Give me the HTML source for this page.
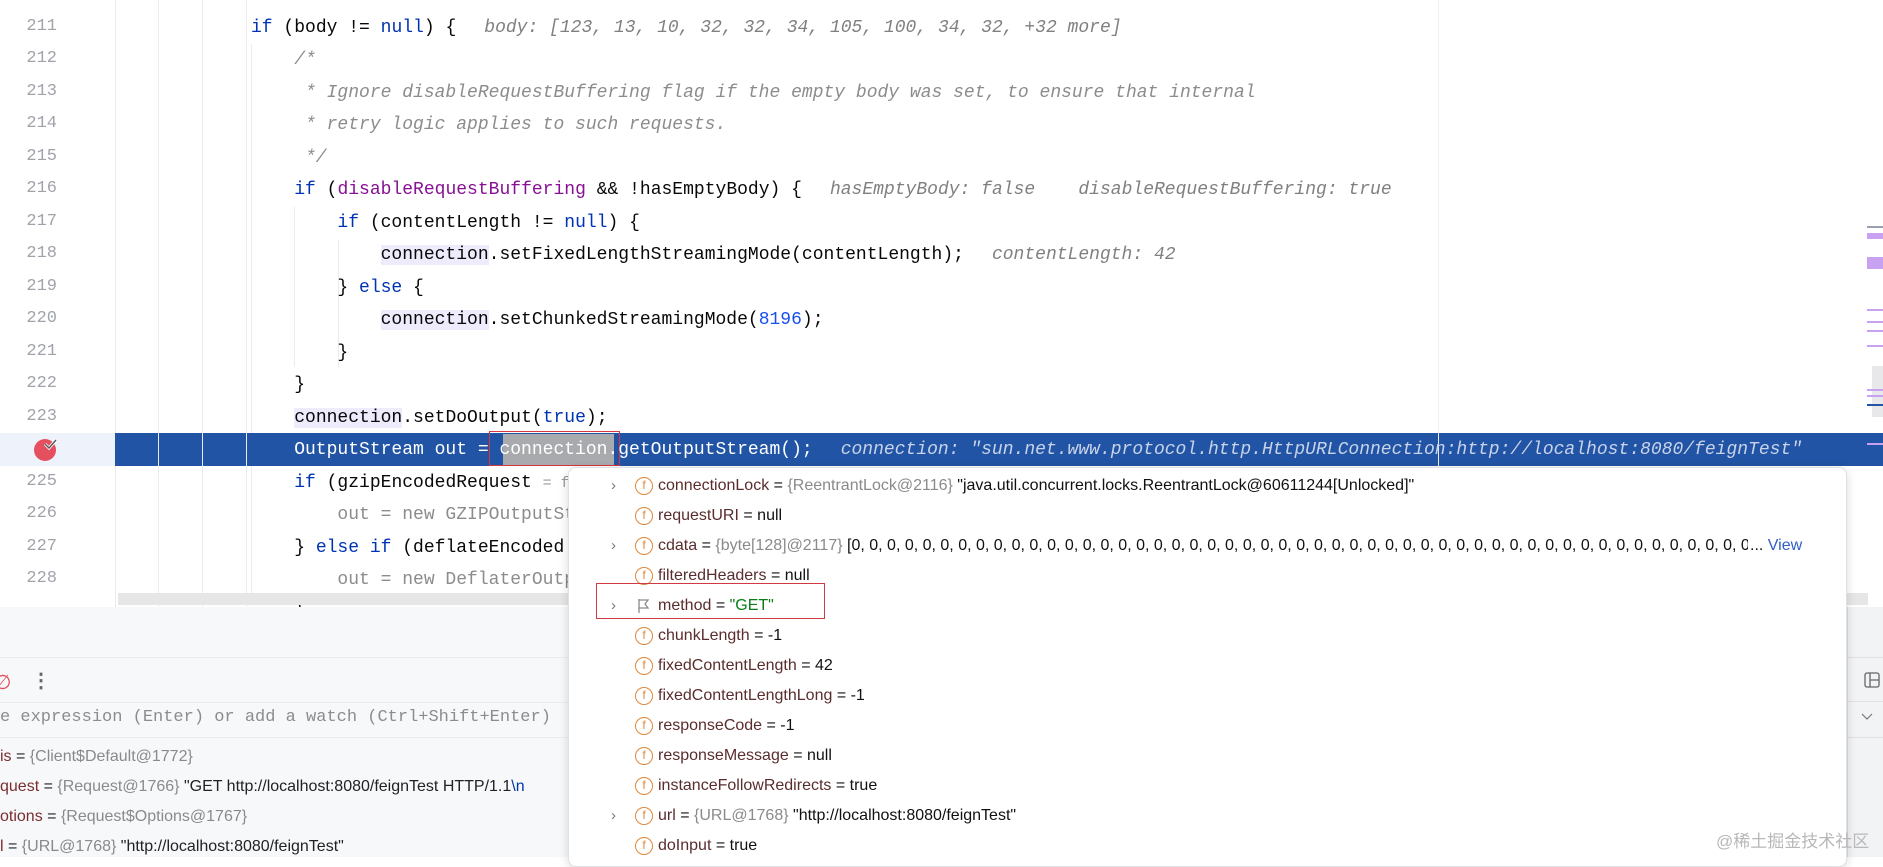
<!DOCTYPE html>
<html><head><meta charset="utf-8">
<style>
*{margin:0;padding:0;box-sizing:border-box}
body{width:1883px;height:857px;overflow:hidden;background:#fff;position:relative;font-family:"Liberation Sans",sans-serif}
.mono{font-family:"Liberation Mono","DejaVu Sans Mono",monospace}
#ed{position:absolute;left:0;top:0;width:1883px;height:607px;background:#fff;overflow:hidden}
.ln{position:absolute;left:0;width:57px;text-align:right;font-size:17px;color:#a0a3aa;font-family:"Liberation Mono",monospace}
.row{position:absolute;left:251px;height:32px;line-height:32px;font-size:18px;white-space:pre;color:#080808;font-family:"Liberation Mono",monospace}
.k{color:#0033b3}.f{color:#871094}.c{color:#8c8c8c;font-style:italic}.n{color:#1750eb}
.h{color:#808080;font-style:italic;margin-left:28px}
.u{background:#edebfc}
.g{color:#8c8c8c}
.vl{position:absolute;width:1px;background:#ebecf0}
#hl{position:absolute;left:115px;top:433px;width:1768px;height:33px;background:#2154a4}
.pop .r{position:absolute;left:0;height:30px;line-height:30px;font-size:16px;white-space:nowrap;color:#5a2d2d}
.fi{position:absolute;left:66px;top:6px;width:18px;height:18px;border:1.5px solid #e0873a;border-radius:50%;color:#e0873a;font-size:12px;line-height:15px;text-align:center;font-family:"Liberation Sans",sans-serif}
.ch{position:absolute;left:42px;top:0;color:#777;font-size:15px}
.gr{color:#8a8a8a}.bk{color:#111}.st{color:#067d17}
.wr{position:absolute;left:0;font-size:16px;white-space:nowrap;color:#222}
.mk{position:absolute;left:1867px;width:16px;background:#c8a2f0}
</style></head><body>
<div id="ed">
  <div style="position:absolute;left:0;top:0;width:115px;height:607px;background:#fff"></div>
  <div style="position:absolute;left:0;top:433px;width:115px;height:33px;background:#eef2fb"></div>
  <div class="vl" style="left:115px;top:0;height:607px"></div>
  <div class="vl" style="left:158px;top:0;height:607px"></div>
  <div class="vl" style="left:202px;top:0;height:607px"></div>
  <div class="vl" style="left:246px;top:0;height:607px"></div>
  <div class="vl" style="left:1438px;top:0;height:607px;background:#eeeff2"></div>
  <!-- indent guides -->
  <div class="vl" style="left:251px;top:44px;height:560px"></div>
  <div class="vl" style="left:294px;top:207px;height:160px"></div>
  <div class="vl" style="left:338px;top:240px;height:128px"></div>
  <div id="hl"></div>
  <div class="vl" style="left:158px;top:433px;height:33px;background:#e8ecf5"></div>
  <div class="vl" style="left:202px;top:433px;height:33px;background:#e8ecf5"></div>
  <div class="vl" style="left:246px;top:433px;height:33px;background:#e8ecf5"></div>
  <div class="vl" style="left:1438px;top:433px;height:33px;background:#e8ecf5"></div>

  <div class="ln" style="top:-16px">210</div>
  <div class="ln" style="top:17px">211</div>
  <div class="ln" style="top:49px">212</div>
  <div class="ln" style="top:82px">213</div>
  <div class="ln" style="top:114px">214</div>
  <div class="ln" style="top:147px">215</div>
  <div class="ln" style="top:179px">216</div>
  <div class="ln" style="top:212px">217</div>
  <div class="ln" style="top:244px">218</div>
  <div class="ln" style="top:277px">219</div>
  <div class="ln" style="top:309px">220</div>
  <div class="ln" style="top:342px">221</div>
  <div class="ln" style="top:374px">222</div>
  <div class="ln" style="top:407px">223</div>
  <div class="ln" style="top:472px">225</div>
  <div class="ln" style="top:504px">226</div>
  <div class="ln" style="top:537px">227</div>
  <div class="ln" style="top:569px">228</div>
  <!-- breakpoint -->
  <svg style="position:absolute;left:32px;top:436px" width="28" height="26" viewBox="0 0 28 26"><circle cx="13" cy="14" r="11" fill="#e5505f"/><path d="M13 8l4 4 7-8" stroke="#fff" stroke-width="3" fill="none"/><path d="M13 8l4 4 7-8" stroke="#555" stroke-width="1.4" fill="none"/></svg>

  <div class="row" style="top:12px"><span class="k">if</span> (body != <span class="k">null</span>) {<span class="h">body: [123, 13, 10, 32, 32, 34, 105, 100, 34, 32, +32 more]</span></div>
  <div class="row c" style="top:44px">    /*</div>
  <div class="row c" style="top:77px">     * Ignore disableRequestBuffering flag if the empty body was set, to ensure that internal</div>
  <div class="row c" style="top:109px">     * retry logic applies to such requests.</div>
  <div class="row c" style="top:142px">     */</div>
  <div class="row" style="top:174px">    <span class="k">if</span> (<span class="f">disableRequestBuffering</span> &amp;&amp; !hasEmptyBody) {<span class="h">hasEmptyBody: false    disableRequestBuffering: true</span></div>
  <div class="row" style="top:207px">        <span class="k">if</span> (contentLength != <span class="k">null</span>) {</div>
  <div class="row" style="top:239px">            <span class="u">connection</span>.setFixedLengthStreamingMode(contentLength);<span class="h">contentLength: 42</span></div>
  <div class="row" style="top:272px">        } <span class="k">else</span> {</div>
  <div class="row" style="top:304px">            <span class="u">connection</span>.setChunkedStreamingMode(<span class="n">8196</span>);</div>
  <div class="row" style="top:337px">        }</div>
  <div class="row" style="top:369px">    }</div>
  <div class="row" style="top:402px">    <span class="u">connection</span>.setDoOutput(<span class="k">true</span>);</div>
  <div style="position:absolute;left:503px;top:434px;width:111px;height:31px;background:#a9aaad"></div>
  <div style="position:absolute;left:489px;top:431px;width:131px;height:35px;border:1.5px solid #d9363e"></div>
  <div class="row" style="top:434px;color:#fff">    OutputStream out = connection.getOutputStream();<span class="h" style="color:#c8d3ea">connection: "sun.net.www.protocol.http.HttpURLConnection:http://localhost:8080/feignTest"</span></div>
  <div class="row" style="top:467px">    <span class="k">if</span> (gzipEncodedRequest <span style="color:#999;font-size:15px">= f</span></div>
  <div class="row g" style="top:499px">        out = new GZIPOutputStream</div>
  <div class="row" style="top:532px">    } <span class="k">else if</span> (deflateEncoded</div>
  <div class="row g" style="top:564px">        out = new DeflaterOutputStream</div>
  <div class="row" style="top:597px">    }</div>
  <!-- scrollbar -->
  <div style="position:absolute;left:118px;top:593px;width:1750px;height:12px;background:#e6e6e6"></div>
  <!-- markers -->
  <div class="mk" style="top:226px;height:2px;background:#9aa0b0"></div>
  <div class="mk" style="top:233px;height:6px"></div>
  <div class="mk" style="top:257px;height:12px"></div>
  <div class="mk" style="top:309px;height:2px"></div>
  <div class="mk" style="top:321px;height:2px"></div>
  <div class="mk" style="top:330px;height:2px"></div>
  <div class="mk" style="top:345px;height:2px"></div>
  <div style="position:absolute;left:1872px;top:366px;width:11px;height:51px;background:#e8e8ea"></div>
  <div class="mk" style="top:389px;height:2px"></div>
  <div class="mk" style="top:395px;height:2px"></div>
  <div class="mk" style="top:404px;height:2px;background:#2154a4"></div>
  <div class="mk" style="top:443px;height:2px"></div>
</div>

<!-- bottom panel -->
<div style="position:absolute;left:0;top:607px;width:1883px;height:250px;background:#f7f8fa">
  <div style="position:absolute;left:0;top:50px;width:1847px;height:1px;background:#ebecf0"></div>
  <div style="position:absolute;left:-6px;top:63px;color:#e5505f;font-size:20px">∅</div>
  <div style="position:absolute;left:31px;top:61px;color:#666;font-size:20px;font-weight:bold">⋮</div>
  <div style="position:absolute;left:0;top:95px;width:1847px;height:1px;background:#ebecf0"></div>
  <div class="mono" style="position:absolute;left:0;top:101px;font-size:17px;color:#8c8c8c;white-space:pre">e expression (Enter) or add a watch (Ctrl+Shift+Enter)</div>
  <div style="position:absolute;left:0;top:130px;width:1847px;height:1px;background:#ebecf0"></div>
  <div class="wr" style="top:141px"><span style="color:#7a2e2e">is</span> = <span class="gr">{Client$Default@1772}</span></div>
  <div class="wr" style="top:171px"><span style="color:#7a2e2e">quest</span> = <span class="gr">{Request@1766}</span> "GET http://localhost:8080/feignTest HTTP/1.1<span style="color:#0037a6">\n</span></div>
  <div class="wr" style="top:201px"><span style="color:#7a2e2e">otions</span> = <span class="gr">{Request$Options@1767}</span></div>
  <div class="wr" style="top:231px"><span style="color:#7a2e2e">l</span> = <span class="gr">{URL@1768}</span> "http://localhost:8080/feignTest"</div>
  <!-- right strip -->
  <div style="position:absolute;left:1847px;top:0;width:36px;height:250px;background:#f2f3f5;border-left:1px solid #dcdde0"></div>
  <div style="position:absolute;left:1847px;top:50px;width:36px;height:1px;background:#e0e0e3"></div>
  <div style="position:absolute;left:1847px;top:94px;width:36px;height:1px;background:#e0e0e3"></div>
  <div style="position:absolute;left:1847px;top:130px;width:36px;height:1px;background:#e0e0e3"></div>
  <svg style="position:absolute;left:1864px;top:65px" width="16" height="16"><rect x="1" y="1" width="14" height="14" rx="2" fill="none" stroke="#666" stroke-width="1.3"/><path d="M6 1v14M6 8h9" stroke="#666" stroke-width="1.3"/></svg>
  <svg style="position:absolute;left:1861px;top:106px" width="12" height="8"><path d="M1 1l5 5 5-5" stroke="#777" fill="none" stroke-width="1.2"/></svg>
</div>

<!-- popup -->
<div class="pop" style="position:absolute;left:568px;top:467px;width:1279px;height:400px;background:#fff;border:1px solid #dfe1e5;border-radius:8px;box-shadow:0 2px 10px rgba(0,0,0,.15);overflow:hidden">
  <div class="r" style="top:3px;width:1270px"><span class="ch">›</span><span class="fi">f</span><span style="position:absolute;left:89px">connectionLock <span class="bk">=</span> <span class="gr">{ReentrantLock@2116}</span> <span class="bk">"java.util.concurrent.locks.ReentrantLock@60611244[Unlocked]"</span></span></div>
  <div class="r" style="top:33px"><span class="fi">f</span><span style="position:absolute;left:89px">requestURI <span class="bk">= null</span></span></div>
  <div class="r" style="top:63px;width:1270px"><span class="ch">›</span><span class="fi">f</span><span style="position:absolute;left:89px;width:1090px;overflow:hidden">cdata <span class="bk">=</span> <span class="gr">{byte[128]@2117}</span> <span class="bk">[0, 0, 0, 0, 0, 0, 0, 0, 0, 0, 0, 0, 0, 0, 0, 0, 0, 0, 0, 0, 0, 0, 0, 0, 0, 0, 0, 0, 0, 0, 0, 0, 0, 0, 0, 0, 0, 0, 0, 0, 0, 0, 0, 0, 0, 0, 0, 0, 0, 0, 0, 0, 0, 0, 0, 0, 0, 0, 0, 0,</span></span><span style="position:absolute;left:1181px;color:#2f5ec4"><span class="bk">...</span> View</span></div>
  <div class="r" style="top:93px"><span class="fi">f</span><span style="position:absolute;left:89px">filteredHeaders <span class="bk">= null</span></span></div>
  <div class="r" style="top:123px"><span class="ch">›</span><svg style="position:absolute;left:68px;top:7px" width="14" height="16"><path d="M2 1v14M2 2h9l-3 4 3 4H2" stroke="#8a8a8a" fill="none" stroke-width="1.3"/></svg><span style="position:absolute;left:89px">method <span class="bk">=</span> <span class="st">"GET"</span></span></div>
  <div class="r" style="top:153px"><span class="fi">f</span><span style="position:absolute;left:89px">chunkLength <span class="bk">= -1</span></span></div>
  <div class="r" style="top:183px"><span class="fi">f</span><span style="position:absolute;left:89px">fixedContentLength <span class="bk">= 42</span></span></div>
  <div class="r" style="top:213px"><span class="fi">f</span><span style="position:absolute;left:89px">fixedContentLengthLong <span class="bk">= -1</span></span></div>
  <div class="r" style="top:243px"><span class="fi">f</span><span style="position:absolute;left:89px">responseCode <span class="bk">= -1</span></span></div>
  <div class="r" style="top:273px"><span class="fi">f</span><span style="position:absolute;left:89px">responseMessage <span class="bk">= null</span></span></div>
  <div class="r" style="top:303px"><span class="fi">f</span><span style="position:absolute;left:89px">instanceFollowRedirects <span class="bk">= true</span></span></div>
  <div class="r" style="top:333px"><span class="ch">›</span><span class="fi">f</span><span style="position:absolute;left:89px">url <span class="bk">=</span> <span class="gr">{URL@1768}</span> <span class="bk">"http://localhost:8080/feignTest"</span></span></div>
  <div class="r" style="top:363px"><span class="fi">f</span><span style="position:absolute;left:89px">doInput <span class="bk">= true</span></span></div>
</div>
<div style="position:absolute;left:596px;top:583px;width:229px;height:36px;border:1.5px solid #d03a40"></div>
<div style="position:absolute;left:1716px;top:827px;font-size:17px;color:#b8b8b8;font-family:'Liberation Sans','Noto Sans CJK SC',sans-serif;white-space:nowrap">@稀土掘金技术社区</div>
</body></html>
